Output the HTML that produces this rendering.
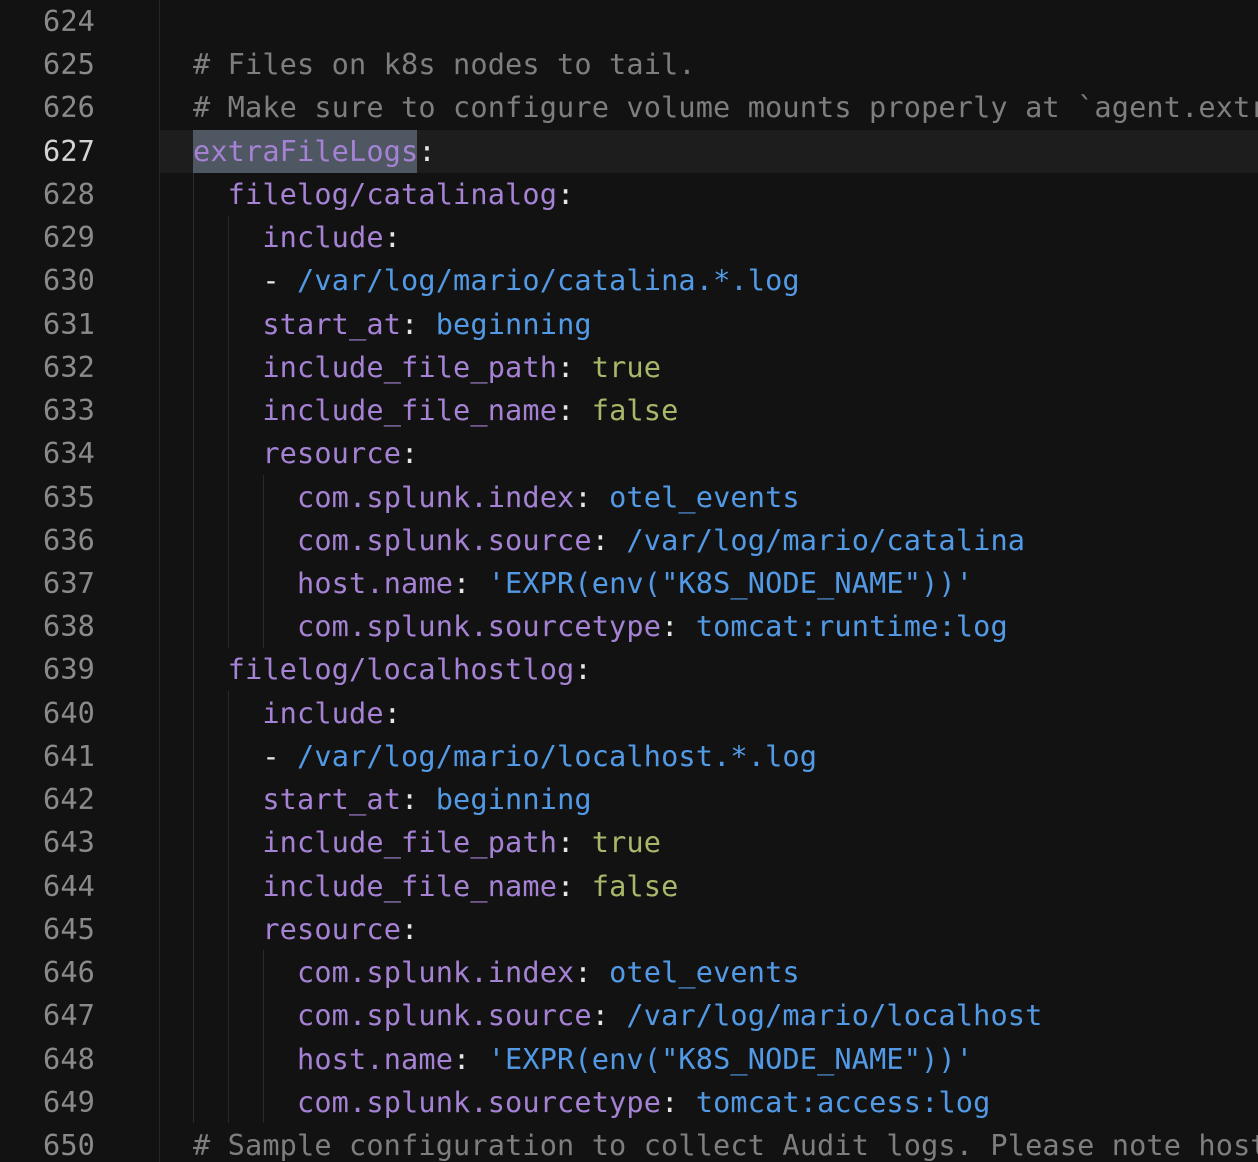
<!DOCTYPE html>
<html><head><meta charset="utf-8"><style>
html,body{margin:0;padding:0;background:#121212;width:1258px;height:1162px;overflow:hidden}
body{position:relative;font-family:"DejaVu Sans Mono","Liberation Mono",monospace;font-size:28.6px;letter-spacing:0.12px}
.gut{position:absolute;left:159px;top:0;width:1px;height:1162px;background:#262626}
.hl{position:absolute;left:160px;top:130px;width:1098px;height:43px;background:#1d1d1d}
.sel{position:absolute;left:193px;top:130px;width:224px;height:43px;background:#4f5763}
.g{position:absolute;width:1px;background:#2a2a2a}
.ln{position:absolute;left:0;width:95px;text-align:right;color:#8a8a8a;height:43.23px;line-height:43.23px;white-space:pre}
.cd{position:absolute;left:193px;width:1065px;overflow:hidden;height:43.23px;line-height:43.23px;white-space:pre;color:#d8d8d8}
.k{color:#a582d4}.s{color:#529ae6}.b{color:#a8b86a}.c{color:#7e7e7e}.w{color:#e6e6e6}
</style></head><body>
<div class="gut"></div><div class="hl"></div><div class="sel"></div>
<div class="g" style="left:193px;top:173px;height:950px"></div>
<div class="g" style="left:228px;top:216px;height:432px"></div>
<div class="g" style="left:228px;top:691px;height:432px"></div>
<div class="g" style="left:263px;top:475px;height:173px"></div>
<div class="g" style="left:263px;top:950px;height:173px"></div>
<div id="c"></div>
<script>
var L=[
"",
'<span class="c"># Files on k8s nodes to tail.</span>',
'<span class="c"># Make sure to configure volume mounts properly at `agent.extraVolumes`</span>',
'<span class="k">extraFileLogs</span><span class="w">:</span>',
'  <span class="k">filelog/catalinalog</span><span class="w">:</span>',
'    <span class="k">include</span><span class="w">:</span>',
'    <span class="w">-</span> <span class="s">/var/log/mario/catalina.*.log</span>',
'    <span class="k">start_at</span><span class="w">:</span> <span class="s">beginning</span>',
'    <span class="k">include_file_path</span><span class="w">:</span> <span class="b">true</span>',
'    <span class="k">include_file_name</span><span class="w">:</span> <span class="b">false</span>',
'    <span class="k">resource</span><span class="w">:</span>',
'      <span class="k">com.splunk.index</span><span class="w">:</span> <span class="s">otel_events</span>',
'      <span class="k">com.splunk.source</span><span class="w">:</span> <span class="s">/var/log/mario/catalina</span>',
'      <span class="k">host.name</span><span class="w">:</span> <span class="s">\'EXPR(env("K8S_NODE_NAME"))\'</span>',
'      <span class="k">com.splunk.sourcetype</span><span class="w">:</span> <span class="s">tomcat:runtime:log</span>',
'  <span class="k">filelog/localhostlog</span><span class="w">:</span>',
'    <span class="k">include</span><span class="w">:</span>',
'    <span class="w">-</span> <span class="s">/var/log/mario/localhost.*.log</span>',
'    <span class="k">start_at</span><span class="w">:</span> <span class="s">beginning</span>',
'    <span class="k">include_file_path</span><span class="w">:</span> <span class="b">true</span>',
'    <span class="k">include_file_name</span><span class="w">:</span> <span class="b">false</span>',
'    <span class="k">resource</span><span class="w">:</span>',
'      <span class="k">com.splunk.index</span><span class="w">:</span> <span class="s">otel_events</span>',
'      <span class="k">com.splunk.source</span><span class="w">:</span> <span class="s">/var/log/mario/localhost</span>',
'      <span class="k">host.name</span><span class="w">:</span> <span class="s">\'EXPR(env("K8S_NODE_NAME"))\'</span>',
'      <span class="k">com.splunk.sourcetype</span><span class="w">:</span> <span class="s">tomcat:access:log</span>',
'<span class="c"># Sample configuration to collect Audit logs. Please note hostPath</span>'
];
var h='';
for(var i=0;i<L.length;i++){var t=(i*43.23).toFixed(2);
h+='<div class="ln" style="top:'+t+'px;'+(i==3?'color:#d4d4d4':'')+'">'+(624+i)+'</div>';
h+='<div class="cd" style="top:'+t+'px">'+L[i]+'</div>';}
document.getElementById('c').innerHTML=h;
</script>
</body></html>
